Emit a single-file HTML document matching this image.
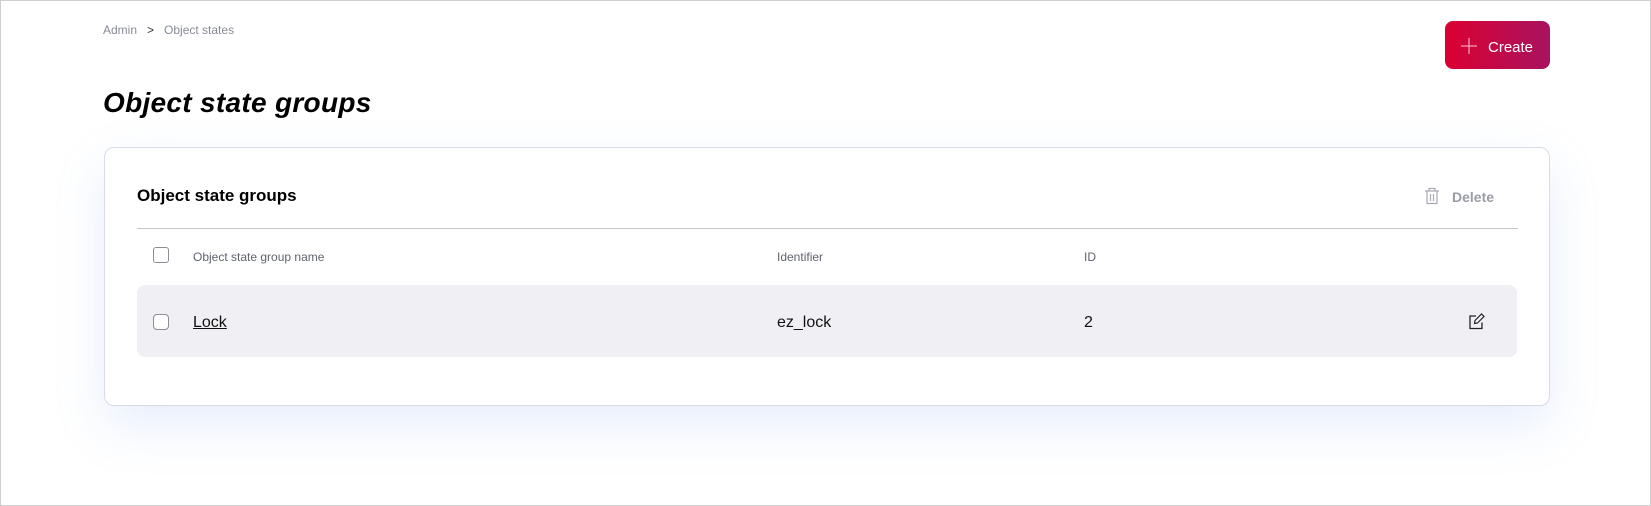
<!DOCTYPE html>
<html><head><style>
*{margin:0;padding:0;box-sizing:border-box}
body{width:1651px;height:506px;background:#fff;font-family:"Liberation Sans",sans-serif;position:relative;overflow:hidden;border:1px solid #cfcfcf}
.a{position:absolute;white-space:nowrap}
.bc{left:102px;top:22px;font-size:12px;color:#878b95}
.title{left:102px;top:86px;font-size:28px;font-weight:bold;font-style:italic;color:#000;letter-spacing:0.3px}
.btn{left:1444px;top:20px;width:105px;height:48px;border-radius:8px;background:linear-gradient(90deg,#db0032,#a8135f);color:#fff;font-size:15px}
.card{left:103px;top:146px;width:1446px;height:259px;border:1px solid #d8dbe5;border-radius:10px;background:#fff;box-shadow:0 20px 50px rgba(120,160,240,0.18)}
.ct{left:136px;top:185px;font-size:17px;font-weight:bold;color:#000}
.hr{left:136px;top:227px;width:1381px;height:1px;background:#c4c6cc}
.cb{width:16px;height:16px;border:1px solid #8a8d96;border-radius:3px;background:#fff}
.th{font-size:12px;color:#5f636c;top:249px}
.row{left:136px;top:284px;width:1380px;height:72px;background:#f0eff4;border-radius:8px}
.td{font-size:16px;color:#111;top:313px}
</style></head><body>
<div class="a bc">Admin &nbsp;&nbsp;<span style="color:#333">&gt;</span>&nbsp;&nbsp; Object states</div>
<div class="a title">Object state groups</div>
<div class="a btn"><svg style="position:absolute;left:15px;top:16px" width="18" height="18"><path d="M9 1v16M1 9h16" stroke="#f4a0b4" stroke-width="1.3"/></svg><span style="position:absolute;left:43px;top:18px">Create</span></div>
<div class="a card"></div>
<div class="a ct">Object state groups</div>
<svg class="a" style="left:1423px;top:186px" width="16" height="18"><path d="M1 4h14M5 4V1.5h6V4M3 4v12.5h10V4M6.5 7v7M9.5 7v7" fill="none" stroke="#a8abb3" stroke-width="1.2"/></svg>
<div class="a" style="left:1451px;top:188px;font-size:14px;color:#9a9da5;font-weight:bold">Delete</div>
<div class="a hr"></div>
<div class="a cb" style="left:152px;top:246px"></div>
<div class="a th" style="left:192px">Object state group name</div>
<div class="a th" style="left:776px">Identifier</div>
<div class="a th" style="left:1083px">ID</div>
<div class="a row"></div>
<div class="a cb" style="left:152px;top:313px;border-radius:4px"></div>
<div class="a td" style="left:192px;text-decoration:underline">Lock</div>
<div class="a td" style="left:776px">ez_lock</div>
<div class="a td" style="left:1083px">2</div>
<svg class="a" style="left:1467px;top:311px" width="18" height="18"><path d="M8 4H2v12.5h12v-6" fill="none" stroke="#222" stroke-width="1.3"/><path d="M6.5 11.5l.5-3L13.5 2l2.5 2.5L9.5 11z" fill="none" stroke="#222" stroke-width="1.2"/></svg>
</body></html>
